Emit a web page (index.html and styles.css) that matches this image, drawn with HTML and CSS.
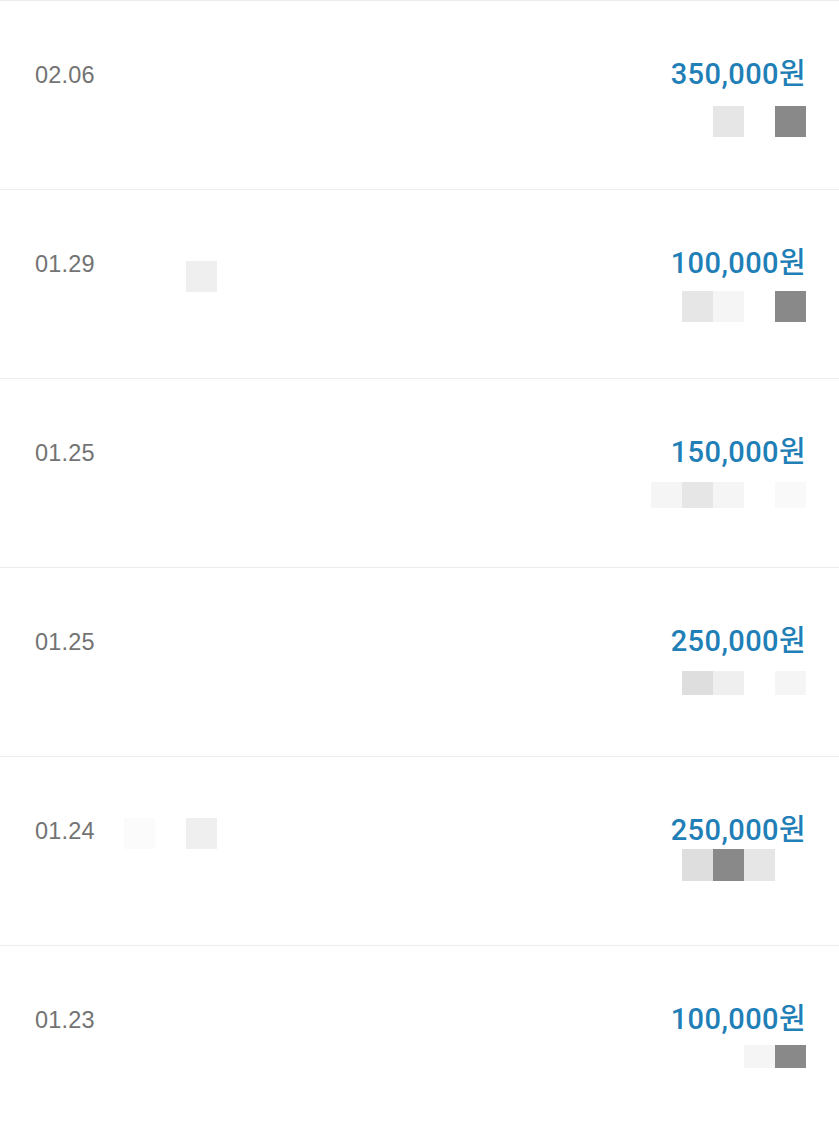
FILE: index.html
```html
<!DOCTYPE html>
<html lang="ko">
<head>
<meta charset="utf-8">
<title>입금 내역</title>
<link rel="stylesheet" href="styles.css">
</head>
<body>
<ul class="list">
  <li class="row">
    <div class="date">02.06</div>
    <div class="mid"></div>
    <div class="right">
      <div class="amount">350,000원</div>
      <div class="cells cells-1">
        <span class="c"></span><span class="c"></span><span class="c g1"></span><span class="c"></span><span class="c dk"></span>
      </div>
    </div>
  </li>
  <li class="row">
    <div class="date">01.29</div>
    <div class="mid mid-a">
      <span class="c"></span><span class="c"></span><span class="c g3"></span>
    </div>
    <div class="right">
      <div class="amount">100,000원</div>
      <div class="cells cells-2">
        <span class="c"></span><span class="c g1"></span><span class="c g4"></span><span class="c"></span><span class="c dk"></span>
      </div>
    </div>
  </li>
  <li class="row">
    <div class="date">01.25</div>
    <div class="mid"></div>
    <div class="right">
      <div class="amount">150,000원</div>
      <div class="cells cells-3">
        <span class="c g4"></span><span class="c g1"></span><span class="c g4"></span><span class="c"></span><span class="c g5"></span>
      </div>
    </div>
  </li>
  <li class="row">
    <div class="date">01.25</div>
    <div class="mid"></div>
    <div class="right">
      <div class="amount">250,000원</div>
      <div class="cells cells-4">
        <span class="c"></span><span class="c g2"></span><span class="c g3"></span><span class="c"></span><span class="c g4"></span>
      </div>
    </div>
  </li>
  <li class="row">
    <div class="date">01.24</div>
    <div class="mid mid-b">
      <span class="c g6"></span><span class="c"></span><span class="c g3"></span>
    </div>
    <div class="right">
      <div class="amount">250,000원</div>
      <div class="cells cells-5">
        <span class="c"></span><span class="c g2"></span><span class="c dk"></span><span class="c g1"></span><span class="c"></span>
      </div>
    </div>
  </li>
  <li class="row">
    <div class="date">01.23</div>
    <div class="mid"></div>
    <div class="right">
      <div class="amount">100,000원</div>
      <div class="cells cells-6">
        <span class="c"></span><span class="c"></span><span class="c"></span><span class="c g4"></span><span class="c dk"></span>
      </div>
    </div>
  </li>
</ul>
</body>
</html>
```

FILE: styles.css
```css
html, body {
  margin: 0;
  padding: 0;
  background: #ffffff;
}

body {
  font-family: "Liberation Sans", "Noto Sans CJK KR", sans-serif;
}

.list {
  list-style: none;
  margin: 0;
  padding: 0;
}

.row {
  display: flex;
  align-items: flex-start;
  height: 188px;
  border-top: 1px solid #ececec;
  padding: 0 33px 0 35px;
}

.date {
  width: 89px;
  flex: none;
  margin-top: 58px;
  font-size: 23.5px;
  line-height: 32px;
  color: #737373;
  letter-spacing: 0.2px;
}

.mid {
  flex: 1;
  display: flex;
}

.mid-a {
  margin-top: 71px;
}

.mid-b {
  margin-top: 61px;
}

.right {
  display: flex;
  flex-direction: column;
  align-items: flex-end;
  margin-top: 56px;
}

.amount {
  font-family: Roboto, "Noto Sans CJK KR", sans-serif;
  font-size: 29px;
  font-weight: 500;
  line-height: 34px;
  color: #1f7fb6;
  letter-spacing: 0.4px;
  margin-right: 0;
}

.cells {
  display: flex;
}

.cells-1 { margin-top: 15px; }
.cells-2 { margin-top: 11px; }
.cells-3 { margin-top: 13px; }
.cells-3 .c { height: 26px; }
.cells-4 { margin-top: 13px; }
.cells-4 .c { height: 24px; }
.cells-5 { margin-top: 2px; }
.cells-5 .c { height: 32px; }
.cells-6 { margin-top: 9px; }
.cells-6 .c { height: 23px; }

.c {
  display: block;
  width: 31px;
  height: 31px;
  background: transparent;
}

.dk { background: #898989; }
.g1 { background: #e6e6e6; }
.g2 { background: #dedede; }
.g3 { background: #efefef; }
.g4 { background: #f5f5f5; }
.g5 { background: #f9f9f9; }
.g6 { background: #fbfbfb; }
```
